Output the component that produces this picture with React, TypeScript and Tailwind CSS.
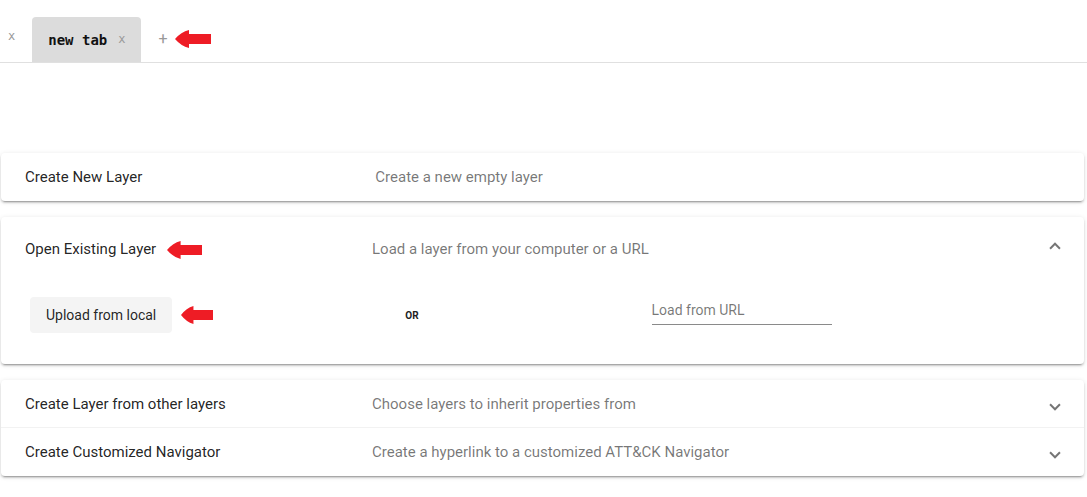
import { useState } from "react";

const shadow =
  "shadow-[0_3px_1px_-2px_rgba(0,0,0,0.2),0_2px_2px_0_rgba(0,0,0,0.14),0_1px_5px_0_rgba(0,0,0,0.12)]";

function RedArrow({ className }: { className?: string }) {
  return (
    <svg viewBox="0 0 36 18" preserveAspectRatio="none" className={className} aria-hidden>
      <path d="M0,9 Q6,2 14,0 L14,4 L36,4 L36,14 L14,14 L14,18 Q6,16 0,9 Z" fill="#ee1c25" />
    </svg>
  );
}

function Indicator({ open }: { open?: boolean }) {
  return (
    <span className="flex w-[10px] items-center justify-center">
      <span
        className={
          "inline-block border-solid border-[rgba(0,0,0,0.54)] border-t-0 border-l-0 border-r-2 border-b-2 p-[3px] " +
          (open ? "mb-[4px] rotate-[225deg]" : "rotate-45")
        }
      />
    </span>
  );
}

function Header({
  title,
  desc,
  open,
  chevron = true,
  arrow,
}: {
  title: string;
  desc: string;
  open?: boolean;
  chevron?: boolean;
  arrow?: boolean;
}) {
  return (
    <div className={"flex items-center px-6 pt-[2px] text-[15px] " + (open ? "h-16" : "h-12")}>
      <div className="mr-4 flex flex-1 basis-0 items-center text-[rgba(0,0,0,0.87)]">
        {title}
        {arrow && <RedArrow className="ml-[11px] h-[18px] w-[35px]" />}
      </div>
      <div className="mr-4 flex-[2] basis-0 text-[rgba(0,0,0,0.54)]">{desc}</div>
      {chevron && <Indicator open={open} />}
    </div>
  );
}

export default function App() {
  const [url, setUrl] = useState("");

  return (
    <div className="min-h-screen bg-white font-['Roboto',sans-serif] text-sm">
      <div className="flex h-[63px] items-end border-b border-[#e0e0e0]">
        <span className="mb-[17px] ml-[8px] mr-[17px] font-['DejaVu_Sans_Mono',monospace] text-[12px] text-[#999]">x</span>
        <div className="flex h-[45px] items-center rounded-t-[4px] bg-[#dcdcdc] pl-4 pr-4">
          <span className="font-['DejaVu_Sans_Mono',monospace] text-[14px] font-bold text-[#111]">new tab</span>
          <span className="ml-[11px] font-['DejaVu_Sans_Mono',monospace] text-[12px] text-[#999]">x</span>
        </div>
        <div className="mb-[14px] ml-[17px] flex items-center">
          <span className="text-[16px] leading-none text-[#999]">+</span>
          <RedArrow className="ml-[7px] h-[18px] w-[36px]" />
        </div>
      </div>

      <div className="ml-px mr-[3px] mt-[90px] flex flex-col gap-4">
        <div className={"rounded bg-white " + shadow}>
          <Header title="Create New Layer" desc="Create a new empty layer" chevron={false} />
        </div>

        <div className={"rounded bg-white " + shadow}>
          <Header
            title="Open Existing Layer"
            desc="Load a layer from your computer or a URL"
            open
            arrow
          />
          <div className="flex items-center gap-[233px] px-6 pb-[31px] pt-4">
            <div className="ml-[5px] flex items-center">
              <button className="h-9 rounded bg-[#f4f4f4] px-4 text-[14px] font-normal text-[rgba(0,0,0,0.87)]">
                Upload from local
              </button>
              <RedArrow className="ml-[9px] h-[18px] w-[32px]" />
            </div>
            <span className="-ml-[41px] mt-[2px] text-[10px] font-bold text-[#222]">OR</span>
            <div className="-mt-[6px] w-[180px] border-b border-[#8a8a8a]">
              <input
                value={url}
                onChange={(e) => setUrl(e.target.value)}
                placeholder="Load from URL"
                className="w-full bg-transparent pb-[4px] text-[14px] text-[rgba(0,0,0,0.87)] outline-none placeholder:text-[rgba(0,0,0,0.54)]"
              />
            </div>
          </div>
        </div>

        <div className={"rounded bg-white " + shadow}>
          <Header title="Create Layer from other layers" desc="Choose layers to inherit properties from" />
          <div className="-mt-px border-t border-[rgba(0,0,0,0.05)]">
            <Header title="Create Customized Navigator" desc="Create a hyperlink to a customized ATT&CK Navigator" />
          </div>
        </div>
      </div>
    </div>
  );
}
